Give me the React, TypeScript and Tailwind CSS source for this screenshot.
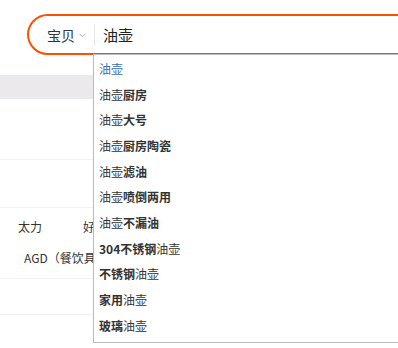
import React from "react";

const items: { pre?: string; rest?: string }[] = [
  {},
  { rest: "厨房" },
  { rest: "大号" },
  { rest: "厨房陶瓷" },
  { rest: "滤油" },
  { rest: "喷倒两用" },
  { rest: "不漏油" },
  { pre: "304不锈钢" },
  { pre: "不锈钢" },
  { pre: "家用" },
  { pre: "玻璃" },
];

export default function App() {
  const font = { fontFamily: '"Noto Sans CJK SC", "Noto Sans", sans-serif' };
  return (
    <div className="relative w-[398px] h-[348px] overflow-hidden bg-white text-[#333]" style={font}>
      {/* search bar */}
      <div className="pt-[14px] pl-[27px]">
        <div className="h-[41px] w-[420px] border-2 border-r-0 border-[#ff5000] rounded-l-[21px] flex items-center">
          <span className="pl-[18px] text-[14px] leading-none text-[#333]">宝贝</span>
          <svg className="ml-[4px] mt-[2px]" width="7" height="5" viewBox="0 0 7 5">
            <path d="M0.5 0.8 L3.5 3.8 L6.5 0.8" fill="none" stroke="#aaa" strokeWidth="1" />
          </svg>
          <div className="ml-[8px] w-px h-[22px] bg-[#e8e8e8]" />
          <span className="ml-[8px] text-[15px] leading-none text-[#222]">油壶</span>
        </div>
      </div>

      {/* background page content */}
      <div className="mt-[20px] h-[24px] bg-[#ebe9eb]" />
      <div className="mt-[60px] border-t border-[#f2f2f2]" />
      <div className="mt-[47px] border-t border-[#f2f2f2]" />
      <div className="mt-[11px] h-[16px] flex items-center text-[12px]">
        <span className="ml-[18px]">太力</span>
        <span className="ml-[41px]">好</span>
      </div>
      <div className="mt-[15px] h-[16px] flex items-center text-[12px]">
        <span className="ml-[24px]">AGD（餐饮具</span>
      </div>
      <div className="mt-[12px] border-t border-[#f2f2f2]" />
      <div className="mt-[35px] border-t border-[#f2f2f2]" />

      {/* dropdown */}
      <div className="absolute left-[93px] top-[54px] w-[340px] border border-[#bbb] bg-white pt-[1px] pb-[3px]">
        {items.map((it, i) => (
          <div
            key={i}
            className={`h-[25.7px] flex items-center pl-[5px] text-[12px] ${i === 0 ? "text-[#3a6db3]" : "text-[#333]"}`}
          >
            {it.pre && <span className="font-bold">{it.pre}</span>}
            <span>油壶</span>
            {it.rest && <span className="font-bold">{it.rest}</span>}
          </div>
        ))}
      </div>
    </div>
  );
}
